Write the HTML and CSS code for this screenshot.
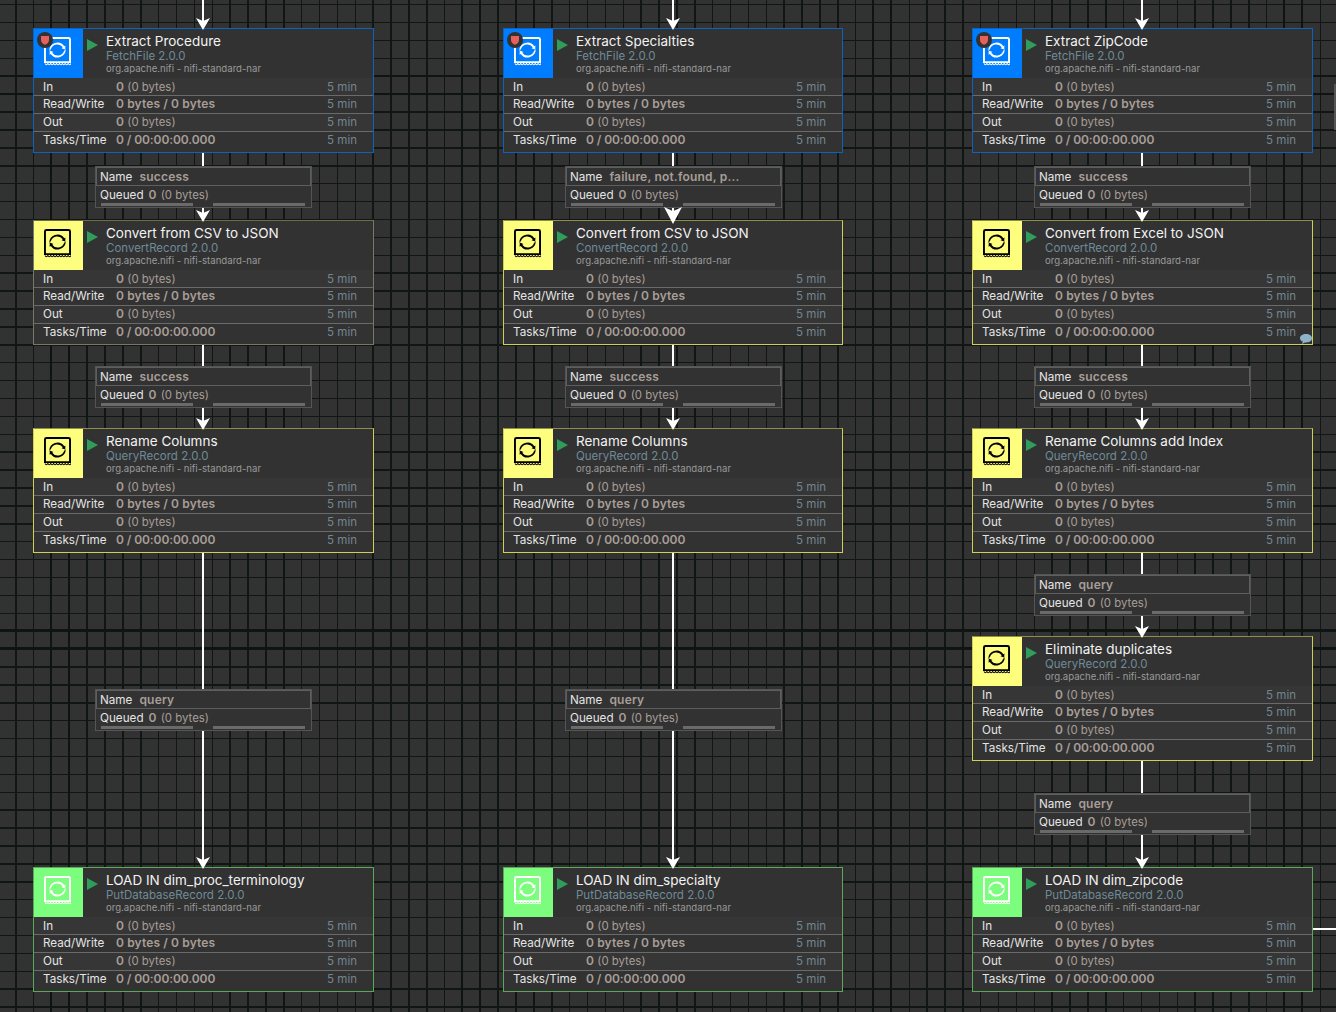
FILE: index.html
```html
<!DOCTYPE html>
<html lang="en">
<head>
    <meta charset="UTF-8">
    <title>NiFi Flow</title>
    <link rel="stylesheet" href="styles.css">
</head>
<body>
    <svg class="defs" width="0" height="0">
        <symbol id="proc" viewBox="0 0 28 30">
            <path d="M2.500 1h23q1.500 0 1.500 1.500v23.500h-26v-23.500q0-1.500 1.500-1.500z" fill="none" stroke="currentColor" stroke-width="2"/>
            <path d="M1 27.500q1.500 2.500 3 0q1.500 2.500 3 0q1.500 2.500 3 0q1.500 2.500 3 0q1.500 2.500 3 0q1.500 2.500 3 0q1.500 2.500 3 0q1.500 2.500 3 0q1.500 2.500 3 0" fill="none" stroke="currentColor" stroke-width="1.100"/>
            <path d="M5.500 14.500a8.500 8.500 0 0 1 15.500-5l1.200-.8l-.2 4.300l-3.800-1.500l1.300-.8a7 7 0 0 0-12.300 1.800q-1 1-1.700 2z" fill="currentColor"/>
            <path d="M22.500 12.500a8.500 8.500 0 0 1-15.500 5l-1.200.8l.2-4.300l3.800 1.500l-1.300.8a7 7 0 0 0 12.300-1.800q1-1 1.700-2z" fill="currentColor"/>
        </symbol>
    </svg>

    <div class="canvas">
        <div class="edge col-a"></div>
        <div class="edge col-b"></div>
        <div class="edge col-c"></div>
        <div class="edge-out"></div>
        <div class="scroll-mark"></div>

        <!-- first column -->
        <div class="node blue col-a y1">
            <div class="head">
                <div class="icon"><svg><use href="#proc"/></svg><span class="badge"><svg viewBox="0 0 10 12"><path d="M0 1h10v5q0 4-5 6q-5-2-5-6z"/></svg></span></div>
                <span class="run"></span>
                <div class="info"><div class="name">Extract Procedure</div><div class="type">FetchFile 2.0.0</div><div class="bundle">org.apache.nifi - nifi-standard-nar</div></div>
            </div>
            <div class="row"><span class="key">In</span><span class="val"><b>0</b> (0 bytes)</span><span class="age">5 min</span></div>
            <div class="row"><span class="key">Read/Write</span><span class="val"><b>0 bytes / 0 bytes</b></span><span class="age">5 min</span></div>
            <div class="row"><span class="key">Out</span><span class="val"><b>0</b> (0 bytes)</span><span class="age">5 min</span></div>
            <div class="row"><span class="key">Tasks/Time</span><span class="val"><b>0 / 00:00:00.000</b></span><span class="age">5 min</span></div>
        </div>
        <div class="label col-a l1">
            <div class="l-name"><span>Name</span><b>success</b></div>
            <div class="l-queue"><span>Queued</span><b>0</b><i>(0 bytes)</i></div>
            <div class="l-bars"><span></span><span></span></div>
        </div>
        <div class="node dull col-a y2">
            <div class="head">
                <div class="icon"><svg><use href="#proc"/></svg></div>
                <span class="run"></span>
                <div class="info"><div class="name">Convert from CSV to JSON</div><div class="type">ConvertRecord 2.0.0</div><div class="bundle">org.apache.nifi - nifi-standard-nar</div></div>
            </div>
            <div class="row"><span class="key">In</span><span class="val"><b>0</b> (0 bytes)</span><span class="age">5 min</span></div>
            <div class="row"><span class="key">Read/Write</span><span class="val"><b>0 bytes / 0 bytes</b></span><span class="age">5 min</span></div>
            <div class="row"><span class="key">Out</span><span class="val"><b>0</b> (0 bytes)</span><span class="age">5 min</span></div>
            <div class="row"><span class="key">Tasks/Time</span><span class="val"><b>0 / 00:00:00.000</b></span><span class="age">5 min</span></div>
        </div>
        <div class="label col-a l2">
            <div class="l-name"><span>Name</span><b>success</b></div>
            <div class="l-queue"><span>Queued</span><b>0</b><i>(0 bytes)</i></div>
            <div class="l-bars"><span></span><span></span></div>
        </div>
        <div class="node yellow col-a y3">
            <div class="head">
                <div class="icon"><svg><use href="#proc"/></svg></div>
                <span class="run"></span>
                <div class="info"><div class="name">Rename Columns</div><div class="type">QueryRecord 2.0.0</div><div class="bundle">org.apache.nifi - nifi-standard-nar</div></div>
            </div>
            <div class="row"><span class="key">In</span><span class="val"><b>0</b> (0 bytes)</span><span class="age">5 min</span></div>
            <div class="row"><span class="key">Read/Write</span><span class="val"><b>0 bytes / 0 bytes</b></span><span class="age">5 min</span></div>
            <div class="row"><span class="key">Out</span><span class="val"><b>0</b> (0 bytes)</span><span class="age">5 min</span></div>
            <div class="row"><span class="key">Tasks/Time</span><span class="val"><b>0 / 00:00:00.000</b></span><span class="age">5 min</span></div>
        </div>
        <div class="label col-a l3">
            <div class="l-name"><span>Name</span><b>query</b></div>
            <div class="l-queue"><span>Queued</span><b>0</b><i>(0 bytes)</i></div>
            <div class="l-bars"><span></span><span></span></div>
        </div>
        <div class="node green col-a y5">
            <div class="head">
                <div class="icon"><svg><use href="#proc"/></svg></div>
                <span class="run"></span>
                <div class="info"><div class="name">LOAD IN dim_proc_terminology</div><div class="type">PutDatabaseRecord 2.0.0</div><div class="bundle">org.apache.nifi - nifi-standard-nar</div></div>
            </div>
            <div class="row"><span class="key">In</span><span class="val"><b>0</b> (0 bytes)</span><span class="age">5 min</span></div>
            <div class="row"><span class="key">Read/Write</span><span class="val"><b>0 bytes / 0 bytes</b></span><span class="age">5 min</span></div>
            <div class="row"><span class="key">Out</span><span class="val"><b>0</b> (0 bytes)</span><span class="age">5 min</span></div>
            <div class="row"><span class="key">Tasks/Time</span><span class="val"><b>0 / 00:00:00.000</b></span><span class="age">5 min</span></div>
        </div>

        <!-- second column -->
        <div class="node blue col-b y1">
            <div class="head">
                <div class="icon"><svg><use href="#proc"/></svg><span class="badge"><svg viewBox="0 0 10 12"><path d="M0 1h10v5q0 4-5 6q-5-2-5-6z"/></svg></span></div>
                <span class="run"></span>
                <div class="info"><div class="name">Extract Specialties</div><div class="type">FetchFile 2.0.0</div><div class="bundle">org.apache.nifi - nifi-standard-nar</div></div>
            </div>
            <div class="row"><span class="key">In</span><span class="val"><b>0</b> (0 bytes)</span><span class="age">5 min</span></div>
            <div class="row"><span class="key">Read/Write</span><span class="val"><b>0 bytes / 0 bytes</b></span><span class="age">5 min</span></div>
            <div class="row"><span class="key">Out</span><span class="val"><b>0</b> (0 bytes)</span><span class="age">5 min</span></div>
            <div class="row"><span class="key">Tasks/Time</span><span class="val"><b>0 / 00:00:00.000</b></span><span class="age">5 min</span></div>
        </div>
        <div class="label col-b l1">
            <div class="l-name"><span>Name</span><b>failure, not.found, p...</b></div>
            <div class="l-queue"><span>Queued</span><b>0</b><i>(0 bytes)</i></div>
            <div class="l-bars"><span></span><span></span></div>
        </div>
        <div class="node yellow big-arrow col-b y2">
            <div class="head">
                <div class="icon"><svg><use href="#proc"/></svg></div>
                <span class="run"></span>
                <div class="info"><div class="name">Convert from CSV to JSON</div><div class="type">ConvertRecord 2.0.0</div><div class="bundle">org.apache.nifi - nifi-standard-nar</div></div>
            </div>
            <div class="row"><span class="key">In</span><span class="val"><b>0</b> (0 bytes)</span><span class="age">5 min</span></div>
            <div class="row"><span class="key">Read/Write</span><span class="val"><b>0 bytes / 0 bytes</b></span><span class="age">5 min</span></div>
            <div class="row"><span class="key">Out</span><span class="val"><b>0</b> (0 bytes)</span><span class="age">5 min</span></div>
            <div class="row"><span class="key">Tasks/Time</span><span class="val"><b>0 / 00:00:00.000</b></span><span class="age">5 min</span></div>
        </div>
        <div class="label col-b l2">
            <div class="l-name"><span>Name</span><b>success</b></div>
            <div class="l-queue"><span>Queued</span><b>0</b><i>(0 bytes)</i></div>
            <div class="l-bars"><span></span><span></span></div>
        </div>
        <div class="node yellow col-b y3">
            <div class="head">
                <div class="icon"><svg><use href="#proc"/></svg></div>
                <span class="run"></span>
                <div class="info"><div class="name">Rename Columns</div><div class="type">QueryRecord 2.0.0</div><div class="bundle">org.apache.nifi - nifi-standard-nar</div></div>
            </div>
            <div class="row"><span class="key">In</span><span class="val"><b>0</b> (0 bytes)</span><span class="age">5 min</span></div>
            <div class="row"><span class="key">Read/Write</span><span class="val"><b>0 bytes / 0 bytes</b></span><span class="age">5 min</span></div>
            <div class="row"><span class="key">Out</span><span class="val"><b>0</b> (0 bytes)</span><span class="age">5 min</span></div>
            <div class="row"><span class="key">Tasks/Time</span><span class="val"><b>0 / 00:00:00.000</b></span><span class="age">5 min</span></div>
        </div>
        <div class="label col-b l3">
            <div class="l-name"><span>Name</span><b>query</b></div>
            <div class="l-queue"><span>Queued</span><b>0</b><i>(0 bytes)</i></div>
            <div class="l-bars"><span></span><span></span></div>
        </div>
        <div class="node green col-b y5">
            <div class="head">
                <div class="icon"><svg><use href="#proc"/></svg></div>
                <span class="run"></span>
                <div class="info"><div class="name">LOAD IN dim_specialty</div><div class="type">PutDatabaseRecord 2.0.0</div><div class="bundle">org.apache.nifi - nifi-standard-nar</div></div>
            </div>
            <div class="row"><span class="key">In</span><span class="val"><b>0</b> (0 bytes)</span><span class="age">5 min</span></div>
            <div class="row"><span class="key">Read/Write</span><span class="val"><b>0 bytes / 0 bytes</b></span><span class="age">5 min</span></div>
            <div class="row"><span class="key">Out</span><span class="val"><b>0</b> (0 bytes)</span><span class="age">5 min</span></div>
            <div class="row"><span class="key">Tasks/Time</span><span class="val"><b>0 / 00:00:00.000</b></span><span class="age">5 min</span></div>
        </div>

        <!-- third column -->
        <div class="node blue col-c y1">
            <div class="head">
                <div class="icon"><svg><use href="#proc"/></svg><span class="badge"><svg viewBox="0 0 10 12"><path d="M0 1h10v5q0 4-5 6q-5-2-5-6z"/></svg></span></div>
                <span class="run"></span>
                <div class="info"><div class="name">Extract ZipCode</div><div class="type">FetchFile 2.0.0</div><div class="bundle">org.apache.nifi - nifi-standard-nar</div></div>
            </div>
            <div class="row"><span class="key">In</span><span class="val"><b>0</b> (0 bytes)</span><span class="age">5 min</span></div>
            <div class="row"><span class="key">Read/Write</span><span class="val"><b>0 bytes / 0 bytes</b></span><span class="age">5 min</span></div>
            <div class="row"><span class="key">Out</span><span class="val"><b>0</b> (0 bytes)</span><span class="age">5 min</span></div>
            <div class="row"><span class="key">Tasks/Time</span><span class="val"><b>0 / 00:00:00.000</b></span><span class="age">5 min</span></div>
        </div>
        <div class="label col-c l1">
            <div class="l-name"><span>Name</span><b>success</b></div>
            <div class="l-queue"><span>Queued</span><b>0</b><i>(0 bytes)</i></div>
            <div class="l-bars"><span></span><span></span></div>
        </div>
        <div class="node yellow col-c y2">
            <div class="head">
                <div class="icon"><svg><use href="#proc"/></svg></div>
                <span class="run"></span>
                <div class="info"><div class="name">Convert from Excel to JSON</div><div class="type">ConvertRecord 2.0.0</div><div class="bundle">org.apache.nifi - nifi-standard-nar</div></div>
            </div>
            <div class="row"><span class="key">In</span><span class="val"><b>0</b> (0 bytes)</span><span class="age">5 min</span></div>
            <div class="row"><span class="key">Read/Write</span><span class="val"><b>0 bytes / 0 bytes</b></span><span class="age">5 min</span></div>
            <div class="row"><span class="key">Out</span><span class="val"><b>0</b> (0 bytes)</span><span class="age">5 min</span></div>
            <div class="row"><span class="key">Tasks/Time</span><span class="val"><b>0 / 00:00:00.000</b></span><span class="age">5 min</span></div>
            <svg class="comment" viewBox="0 0 12 10"><path d="M6 0c3.500 0 6 1.800 6 4.200s-2.500 4.200-6 4.200l-1 0l-3 1.600l.8-2.400c-1.800-.7-2.800-2-2.800-3.400c0-2.400 2.500-4.200 6-4.200z"/></svg>
        </div>
        <div class="label col-c l2">
            <div class="l-name"><span>Name</span><b>success</b></div>
            <div class="l-queue"><span>Queued</span><b>0</b><i>(0 bytes)</i></div>
            <div class="l-bars"><span></span><span></span></div>
        </div>
        <div class="node yellow col-c y3">
            <div class="head">
                <div class="icon"><svg><use href="#proc"/></svg></div>
                <span class="run"></span>
                <div class="info"><div class="name">Rename Columns add Index</div><div class="type">QueryRecord 2.0.0</div><div class="bundle">org.apache.nifi - nifi-standard-nar</div></div>
            </div>
            <div class="row"><span class="key">In</span><span class="val"><b>0</b> (0 bytes)</span><span class="age">5 min</span></div>
            <div class="row"><span class="key">Read/Write</span><span class="val"><b>0 bytes / 0 bytes</b></span><span class="age">5 min</span></div>
            <div class="row"><span class="key">Out</span><span class="val"><b>0</b> (0 bytes)</span><span class="age">5 min</span></div>
            <div class="row"><span class="key">Tasks/Time</span><span class="val"><b>0 / 00:00:00.000</b></span><span class="age">5 min</span></div>
        </div>
        <div class="label col-c l4">
            <div class="l-name"><span>Name</span><b>query</b></div>
            <div class="l-queue"><span>Queued</span><b>0</b><i>(0 bytes)</i></div>
            <div class="l-bars"><span></span><span></span></div>
        </div>
        <div class="node yellow col-c y4">
            <div class="head">
                <div class="icon"><svg><use href="#proc"/></svg></div>
                <span class="run"></span>
                <div class="info"><div class="name">Eliminate duplicates</div><div class="type">QueryRecord 2.0.0</div><div class="bundle">org.apache.nifi - nifi-standard-nar</div></div>
            </div>
            <div class="row"><span class="key">In</span><span class="val"><b>0</b> (0 bytes)</span><span class="age">5 min</span></div>
            <div class="row"><span class="key">Read/Write</span><span class="val"><b>0 bytes / 0 bytes</b></span><span class="age">5 min</span></div>
            <div class="row"><span class="key">Out</span><span class="val"><b>0</b> (0 bytes)</span><span class="age">5 min</span></div>
            <div class="row"><span class="key">Tasks/Time</span><span class="val"><b>0 / 00:00:00.000</b></span><span class="age">5 min</span></div>
        </div>
        <div class="label col-c l5">
            <div class="l-name"><span>Name</span><b>query</b></div>
            <div class="l-queue"><span>Queued</span><b>0</b><i>(0 bytes)</i></div>
            <div class="l-bars"><span></span><span></span></div>
        </div>
        <div class="node green col-c y5">
            <div class="head">
                <div class="icon"><svg><use href="#proc"/></svg></div>
                <span class="run"></span>
                <div class="info"><div class="name">LOAD IN dim_zipcode</div><div class="type">PutDatabaseRecord 2.0.0</div><div class="bundle">org.apache.nifi - nifi-standard-nar</div></div>
            </div>
            <div class="row"><span class="key">In</span><span class="val"><b>0</b> (0 bytes)</span><span class="age">5 min</span></div>
            <div class="row"><span class="key">Read/Write</span><span class="val"><b>0 bytes / 0 bytes</b></span><span class="age">5 min</span></div>
            <div class="row"><span class="key">Out</span><span class="val"><b>0</b> (0 bytes)</span><span class="age">5 min</span></div>
            <div class="row"><span class="key">Tasks/Time</span><span class="val"><b>0 / 00:00:00.000</b></span><span class="age">5 min</span></div>
        </div>
    </div>
</body>
</html>
```
FILE: styles.css
```css
* {
    box-sizing: border-box;
}

html, body {
    margin: 0;
    height: 100%;
    overflow: hidden;
}

body {
    font-family: 'Inter', 'Liberation Sans', sans-serif;
    background-color: #323232;
}

.defs {
    position: absolute;
}

/* grid behind the flow: 18px lines, with a few heavier ones */
.canvas {
    position: relative;
    width: 1336px;
    height: 1012px;
    overflow: hidden;
    background-color: #323232;
    background-image:
        linear-gradient(to right, #0e1412 2px, transparent 2px),
        linear-gradient(to right, #0e1412 2px, transparent 2px),
        linear-gradient(to bottom, #0e1412 2px, transparent 2px),
        linear-gradient(to bottom, #0e1412 2px, transparent 2px),
        repeating-linear-gradient(to right, transparent 0 15px, #101614 15px 16.5px, transparent 16.5px 17.87px),
        repeating-linear-gradient(to bottom, transparent 0 4px, #101614 4px 5.5px, transparent 5.5px 17.9px);
    background-size:
        411px 100%,
        411px 100%,
        100% 554px,
        100% 554px,
        100% 100%,
        100% 100%;
    background-position:
        50px 0,
        68px 0,
        0 75px,
        0 93px,
        0 0,
        0 0;
}

/* node columns */
.col-a { left: 33px; }
.col-b { left: 503px; }
.col-c { left: 972px; }

.y1 { top: 28px; }
.y2 { top: 220px; }
.y3 { top: 428px; }
.y4 { top: 636px; }
.y5 { top: 867px; }

.l1 { top: 166px; }
.l2 { top: 366px; }
.l3 { top: 689px; }
.l4 { top: 574px; }
.l5 { top: 793px; }

/* connections */
.edge {
    position: absolute;
    top: 0;
    width: 2px;
    height: 868px;
    margin-left: 169px;
    background: #fff;
}

.edge-out {
    position: absolute;
    left: 1312px;
    top: 928px;
    width: 24px;
    height: 2px;
    background: #fff;
}

.scroll-mark {
    position: absolute;
    left: 1334px;
    top: 84px;
    width: 2px;
    height: 46px;
    background: #555;
}

.node::before {
    content: "";
    position: absolute;
    left: 162px;
    top: -11px;
    width: 14px;
    height: 12px;
    background: #fff;
    clip-path: polygon(0 0, 50% 25%, 100% 0, 50% 100%);
}

.node.big-arrow::before {
    left: 160px;
    top: -14px;
    width: 18px;
    height: 17px;
}

/* processor */
.node {
    position: absolute;
    width: 341px;
    height: 125px;
    border: 1px solid #888;
    background: #323232;
    font-size: 11.7px;
    color: #e4e4e4;
}

.node.col-b { width: 340px; }

.node.blue { border-color: #0a64bd; }
.node.yellow { border-color: #cfcf55; border-top-color: #8f8f4a; }
.node.dull { border-color: #77776a; border-top-color: #6e6e3e; }
.node.green { border-color: #5aa85a; }

.head {
    display: flex;
    height: 49px;
}

.icon {
    position: relative;
    width: 49px;
    height: 49px;
    flex: none;
    padding: 8px 0 0 10px;
}

.icon > svg {
    display: block;
    width: 27px;
    height: 29px;
}

.blue .icon { background: #007dff; color: #fff; }
.yellow .icon, .dull .icon { background: #fdfd7e; color: #000; }
.green .icon { background: #7dfd7e; color: #fff; }

.badge {
    position: absolute;
    left: 3px;
    top: 3px;
    width: 16px;
    height: 16px;
    border-radius: 50%;
    background: #323232;
    padding: 3px 4px;
}

.badge svg {
    display: block;
    width: 8px;
    height: 10px;
    fill: #e5605e;
}

.run {
    flex: none;
    width: 0;
    height: 0;
    margin: 10px 8px 0 4px;
    border-left: 11px solid #2f9e5b;
    border-top: 6.5px solid transparent;
    border-bottom: 6.5px solid transparent;
}

.info {
    padding-top: 4px;
}

.name {
    font-size: 13.5px;
    line-height: 16px;
    color: #f2f2f2;
}

.type {
    font-size: 11.5px;
    line-height: 14px;
    color: #6f8b98;
}

.bundle {
    font-size: 9.6px;
    line-height: 12px;
    color: #9a9a9a;
}

.row {
    display: flex;
    align-items: baseline;
    height: 18px;
    padding: 0 16px 0 9px;
    line-height: 16px;
    border-top: 1px solid #6a6a6a;
}

.row:nth-child(2) {
    height: 17px;
    border-top: none;
    padding-top: 1px;
    background: #363636;
}

.row:nth-child(4) {
    background: #363636;
}

.row:last-of-type {
    height: 21px;
}

.key {
    width: 73px;
    flex: none;
}

.val {
    flex: 1;
    font-size: 11.4px;
    color: #a89e98;
}

.val b {
    font-size: 12px;
    letter-spacing: .12px;
}

.row:last-of-type .val b {
    letter-spacing: -.08px;
}

.val b, .label b {
    font-weight: 600;
    color: #a89e98;
}

.age {
    font-size: 11.5px;
    color: #72868f;
}

.comment {
    position: absolute;
    right: 0;
    bottom: 0;
    width: 12px;
    height: 10px;
    fill: #8fb4c8;
}

/* connection label */
.label {
    position: absolute;
    width: 217px;
    height: 42px;
    margin-left: 62px;
    border: 1px solid #555;
    background: #323232;
    font-size: 11.7px;
    color: #e4e4e4;
}

.label b {
    font-size: 12px;
    letter-spacing: .2px;
}

.l-name {
    display: flex;
    gap: 7px;
    align-items: center;
    height: 19px;
    padding-left: 3px;
    border: 1px solid #5e5e5e;
}

.l-queue {
    display: flex;
    gap: 4px;
    align-items: center;
    height: 17px;
    padding-left: 4px;
}

.l-queue b {
    margin-left: 1px;
}

.l-queue i {
    font-style: normal;
    font-size: 11.4px;
    color: #a89e98;
}

.l-bars {
    display: flex;
    justify-content: space-between;
    padding: 0 6px 0 5px;
}

.l-bars span {
    width: 92px;
    height: 3px;
    background: #6a6a6a;
}
```
